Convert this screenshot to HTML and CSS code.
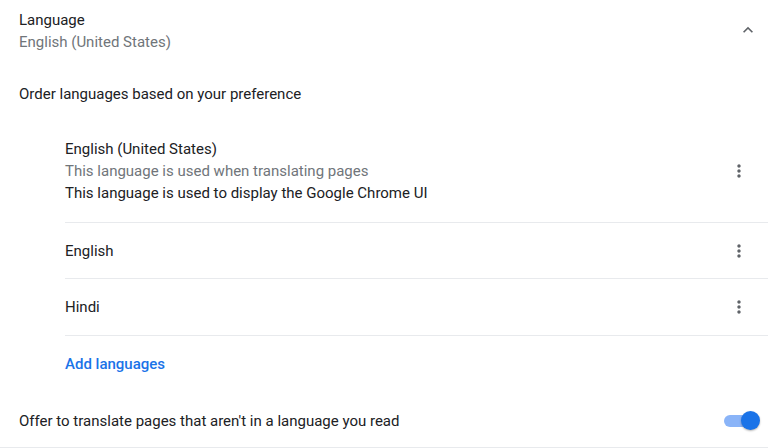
FILE: index.html
```html
<!DOCTYPE html>
<html lang="en">
<head>
<meta charset="utf-8">
<title>Language settings</title>
<link rel="stylesheet" href="styles.css">
</head>
<body>
<div class="page">
  <div class="header">
    <div class="header-text">
      <div class="primary">Language</div>
      <div class="secondary">English (United States)</div>
    </div>
    <div class="chevron">
      <svg width="20" height="20" viewBox="0 0 24 24"><path d="M12 8l-6 6 1.41 1.41L12 10.83l4.59 4.58L18 14z" fill="#5f6368"/></svg>
    </div>
  </div>

  <div class="order-label primary">Order languages based on your preference</div>

  <div class="lang-list">
    <div class="lang-row first">
      <div class="lang-text">
        <div class="primary">English (United States)</div>
        <div class="secondary">This language is used when translating pages</div>
        <div class="primary">This language is used to display the Google Chrome UI</div>
      </div>
      <div class="more">
        <svg width="20" height="20" viewBox="0 0 24 24"><path d="M12 8c1.1 0 2-.9 2-2s-.9-2-2-2-2 .9-2 2 .9 2 2 2zm0 2c-1.1 0-2 .9-2 2s.9 2 2 2 2-.9 2-2-.9-2-2-2zm0 6c-1.1 0-2 .9-2 2s.9 2 2 2 2-.9 2-2-.9-2-2-2z" fill="#5f6368"/></svg>
      </div>
    </div>
    <div class="lang-row">
      <div class="lang-text">
        <div class="primary">English</div>
      </div>
      <div class="more">
        <svg width="20" height="20" viewBox="0 0 24 24"><path d="M12 8c1.1 0 2-.9 2-2s-.9-2-2-2-2 .9-2 2 .9 2 2 2zm0 2c-1.1 0-2 .9-2 2s.9 2 2 2 2-.9 2-2-.9-2-2-2zm0 6c-1.1 0-2 .9-2 2s.9 2 2 2 2-.9 2-2-.9-2-2-2z" fill="#5f6368"/></svg>
      </div>
    </div>
    <div class="lang-row last">
      <div class="lang-text">
        <div class="primary">Hindi</div>
      </div>
      <div class="more">
        <svg width="20" height="20" viewBox="0 0 24 24"><path d="M12 8c1.1 0 2-.9 2-2s-.9-2-2-2-2 .9-2 2 .9 2 2 2zm0 2c-1.1 0-2 .9-2 2s.9 2 2 2 2-.9 2-2-.9-2-2-2zm0 6c-1.1 0-2 .9-2 2s.9 2 2 2 2-.9 2-2-.9-2-2-2z" fill="#5f6368"/></svg>
      </div>
    </div>
    <div class="add-row">
      <span class="link">Add languages</span>
    </div>
  </div>

  <div class="offer-row">
    <div class="primary">Offer to translate pages that aren't in a language you read</div>
    <div class="toggle">
      <div class="toggle-bar"></div>
      <div class="toggle-knob"></div>
    </div>
  </div>
</div>
</body>
</html>
```

FILE: styles.css
```css
html, body {
  margin: 0;
  padding: 0;
  background: #ffffff;
}

body {
  font-family: Roboto, "Liberation Sans", Arial, sans-serif;
  font-size: 15px;
  line-height: 22px;
  color: #202124;
}

.page {
  width: 768px;
  height: 448px;
  overflow: hidden;
}

.primary {
  color: #202124;
}

.secondary {
  color: #70757a;
}

.header {
  display: flex;
  align-items: center;
  padding: 9px 10px 0 19px;
}

.header-text {
  flex: 1;
}

.chevron {
  width: 20px;
  height: 20px;
  display: flex;
  margin-top: -2px;
}

.order-label {
  padding: 30px 0 0 19px;
}

.lang-list {
  padding: 17px 0 0 65px;
}

.lang-row {
  display: flex;
  align-items: center;
  min-height: 56px;
  padding-right: 19px;
  border-bottom: 1px solid #e8eaed;
  box-sizing: border-box;
}

.lang-row.first {
  padding-top: 16px;
  padding-bottom: 18px;
}

.lang-row.last {
  min-height: 57px;
}

.lang-text {
  flex: 1;
}

.more {
  width: 20px;
  height: 20px;
  display: flex;
}

.add-row {
  padding: 17px 0 20px 0;
  height: 22px;
}

.link {
  color: #1a73e8;
  font-weight: 500;
}

.offer-row {
  display: flex;
  align-items: center;
  justify-content: space-between;
  padding: 0 8px 0 19px;
  height: 52px;
  border-bottom: 1px solid #e8eaed;
}

.toggle {
  position: relative;
  width: 36px;
  height: 20px;
}

.toggle-bar {
  position: absolute;
  left: 0;
  top: 4px;
  width: 32px;
  height: 12px;
  border-radius: 6px;
  background: #8ab4f8;
}

.toggle-knob {
  position: absolute;
  right: 0;
  top: 0;
  width: 19px;
  height: 19px;
  border-radius: 50%;
  background: #1a73e8;
  box-shadow: 0 1px 2px rgba(0, 0, 0, 0.3);
}
```
